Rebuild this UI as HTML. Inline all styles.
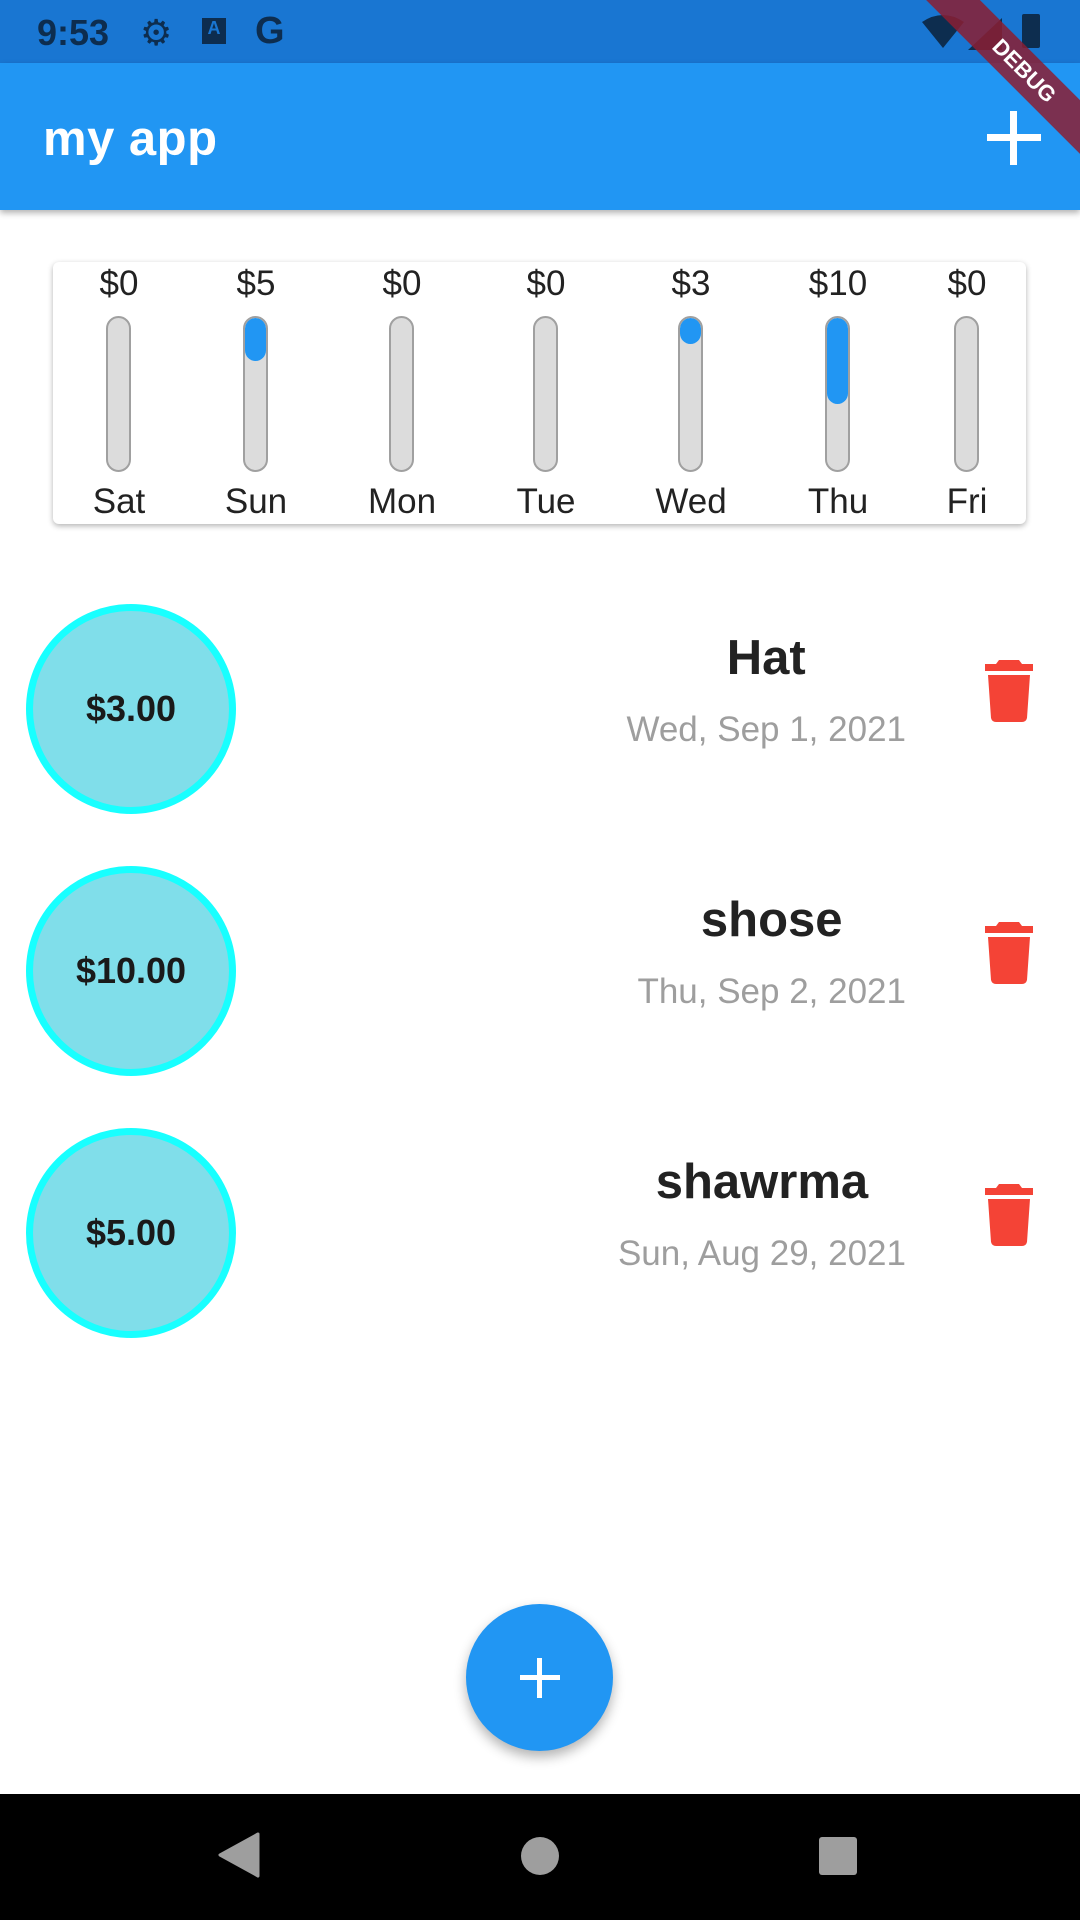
<!DOCTYPE html>
<html><head><meta charset="utf-8"><style>
body{margin:0;width:1080px;height:1920px;position:relative;overflow:hidden;background:#fff;font-family:"Liberation Sans","DejaVu Sans",sans-serif}
.abs{position:absolute}
.status{left:0;top:0;width:1080px;height:63px;background:#1976D2}
.appbar{left:0;top:63px;width:1080px;height:147px;background:#2196F3;box-shadow:0 3px 6px rgba(0,0,0,.3)}
.card{left:53px;top:262px;width:973px;height:262px;background:#fff;border-radius:6px;box-shadow:0 2px 6px rgba(0,0,0,.3)}
.col{position:absolute;top:0;width:140px;margin-left:-70px;text-align:center;font-size:35px;color:#222}
.amt{position:absolute;top:2px;width:100%}
.day{position:absolute;top:220px;width:100%}
.bar{position:absolute;left:57px;top:54px;width:25px;height:156px;background:#dcdcdc;border:2px solid #a0a0a0;border-radius:14px;overflow:hidden;box-sizing:border-box}
.fill{position:absolute;left:0;top:0;width:100%;background:#2196F3;border-radius:12px}
.circle{left:26px;width:210px;height:210px;box-sizing:border-box;border:7px solid #18FFFF;background:#80DEEA;border-radius:50%;display:flex;align-items:center;justify-content:center;font-weight:bold;font-size:36px;color:#1a1a1a}
.info{right:174px;display:flex;flex-direction:column;align-items:center}
.t{font-weight:bold;font-size:49px;color:#222;line-height:60px}
.d{font-size:35px;color:#9e9e9e;margin-top:22px;line-height:40px}
</style></head><body>
<div class="abs status">
<div class="abs" style="left:37px;top:12px;font-size:36px;color:#0d2d4f;font-weight:bold">9:53</div>
<div class="abs" style="left:140px;top:12px;font-size:36px;color:#0d2d4f">⚙</div>
<div class="abs" style="left:202px;top:18px;width:24px;height:26px;background:#0d2d4f;color:#1976D2;font-size:18px;font-weight:bold;text-align:center">A</div>
<div class="abs" style="left:255px;top:10px;font-size:38px;font-weight:bold;color:#0d2d4f">G</div>
<svg class="abs" style="left:922px;top:14px" width="42" height="34"><path d="M0 8 Q21-6 42 8 L21 34Z" fill="#0d2d4f"/></svg>
<svg class="abs" style="left:968px;top:18px" width="34" height="32"><path d="M34 0 V32 H0Z" fill="#0d2d4f"/></svg>
<div class="abs" style="left:1022px;top:14px;width:18px;height:34px;background:#0d2d4f;border-radius:2px"></div>
</div>
<div class="abs appbar">
<div class="abs" style="left:43px;top:48px;font-size:49px;color:#fff;font-weight:bold;letter-spacing:0.5px">my app</div>
<div class="abs" style="left:987px;top:71px;width:54px;height:7px;background:#fff"></div>
<div class="abs" style="left:1010px;top:48px;width:7px;height:54px;background:#fff"></div>
</div>
<div class="abs" style="left:880px;top:0;width:200px;height:200px;overflow:hidden;z-index:10">
<div class="abs" style="left:14px;top:52px;width:260px;height:38px;background:rgba(139,30,50,.85);transform:rotate(45deg);color:#fff;font-weight:bold;font-size:22px;text-align:center;line-height:38px">DEBUG</div>
</div>
<div class="abs card">
<div class="col" style="left:66px"><div class="amt">$0</div><div class="bar"></div><div class="day">Sat</div></div>
<div class="col" style="left:203px"><div class="amt">$5</div><div class="bar"><div class="fill" style="height:43px"></div></div><div class="day">Sun</div></div>
<div class="col" style="left:349px"><div class="amt">$0</div><div class="bar"></div><div class="day">Mon</div></div>
<div class="col" style="left:493px"><div class="amt">$0</div><div class="bar"></div><div class="day">Tue</div></div>
<div class="col" style="left:638px"><div class="amt">$3</div><div class="bar"><div class="fill" style="height:26px"></div></div><div class="day">Wed</div></div>
<div class="col" style="left:785px"><div class="amt">$10</div><div class="bar"><div class="fill" style="height:86px"></div></div><div class="day">Thu</div></div>
<div class="col" style="left:914px"><div class="amt">$0</div><div class="bar"></div><div class="day">Fri</div></div>
</div>

<div class="abs circle" style="top:604px">$3.00</div>
<div class="abs info" style="top:628px"><div class="t">Hat</div><div class="d">Wed, Sep 1, 2021</div></div>
<div class="abs circle" style="top:866px">$10.00</div>
<div class="abs info" style="top:890px"><div class="t">shose</div><div class="d">Thu, Sep 2, 2021</div></div>
<div class="abs circle" style="top:1128px">$5.00</div>
<div class="abs info" style="top:1152px"><div class="t">shawrma</div><div class="d">Sun, Aug 29, 2021</div></div>

<svg class="abs" style="left:985px;top:660px" width="48" height="62" viewBox="0 0 48 62"><path d="M14 0h20l3 4h11v7H0V4h11z M3 15h42l-3 43q-1 4-5 4H11q-4 0-5-4z" fill="#F44336"/></svg>
<svg class="abs" style="left:985px;top:922px" width="48" height="62" viewBox="0 0 48 62"><path d="M14 0h20l3 4h11v7H0V4h11z M3 15h42l-3 43q-1 4-5 4H11q-4 0-5-4z" fill="#F44336"/></svg>
<svg class="abs" style="left:985px;top:1184px" width="48" height="62" viewBox="0 0 48 62"><path d="M14 0h20l3 4h11v7H0V4h11z M3 15h42l-3 43q-1 4-5 4H11q-4 0-5-4z" fill="#F44336"/></svg>

<div class="abs" style="left:466px;top:1604px;width:147px;height:147px;border-radius:50%;background:#2196F3;box-shadow:0 6px 12px rgba(0,0,0,.3)">
<div class="abs" style="left:54px;top:71px;width:40px;height:5px;background:#fff"></div>
<div class="abs" style="left:71px;top:54px;width:5px;height:40px;background:#fff"></div>
</div>
<div class="abs" style="left:0;top:1794px;width:1080px;height:126px;background:#000">
<svg class="abs" style="left:218px;top:38px" width="42" height="46"><path d="M40 2 L2 23 L40 44Z" fill="#9e9e9e" stroke="#9e9e9e" stroke-width="3" stroke-linejoin="round"/></svg>
<div class="abs" style="left:521px;top:43px;width:38px;height:38px;border-radius:50%;background:#9e9e9e"></div>
<div class="abs" style="left:819px;top:43px;width:38px;height:38px;border-radius:3px;background:#9e9e9e"></div>
</div>
</body></html>
